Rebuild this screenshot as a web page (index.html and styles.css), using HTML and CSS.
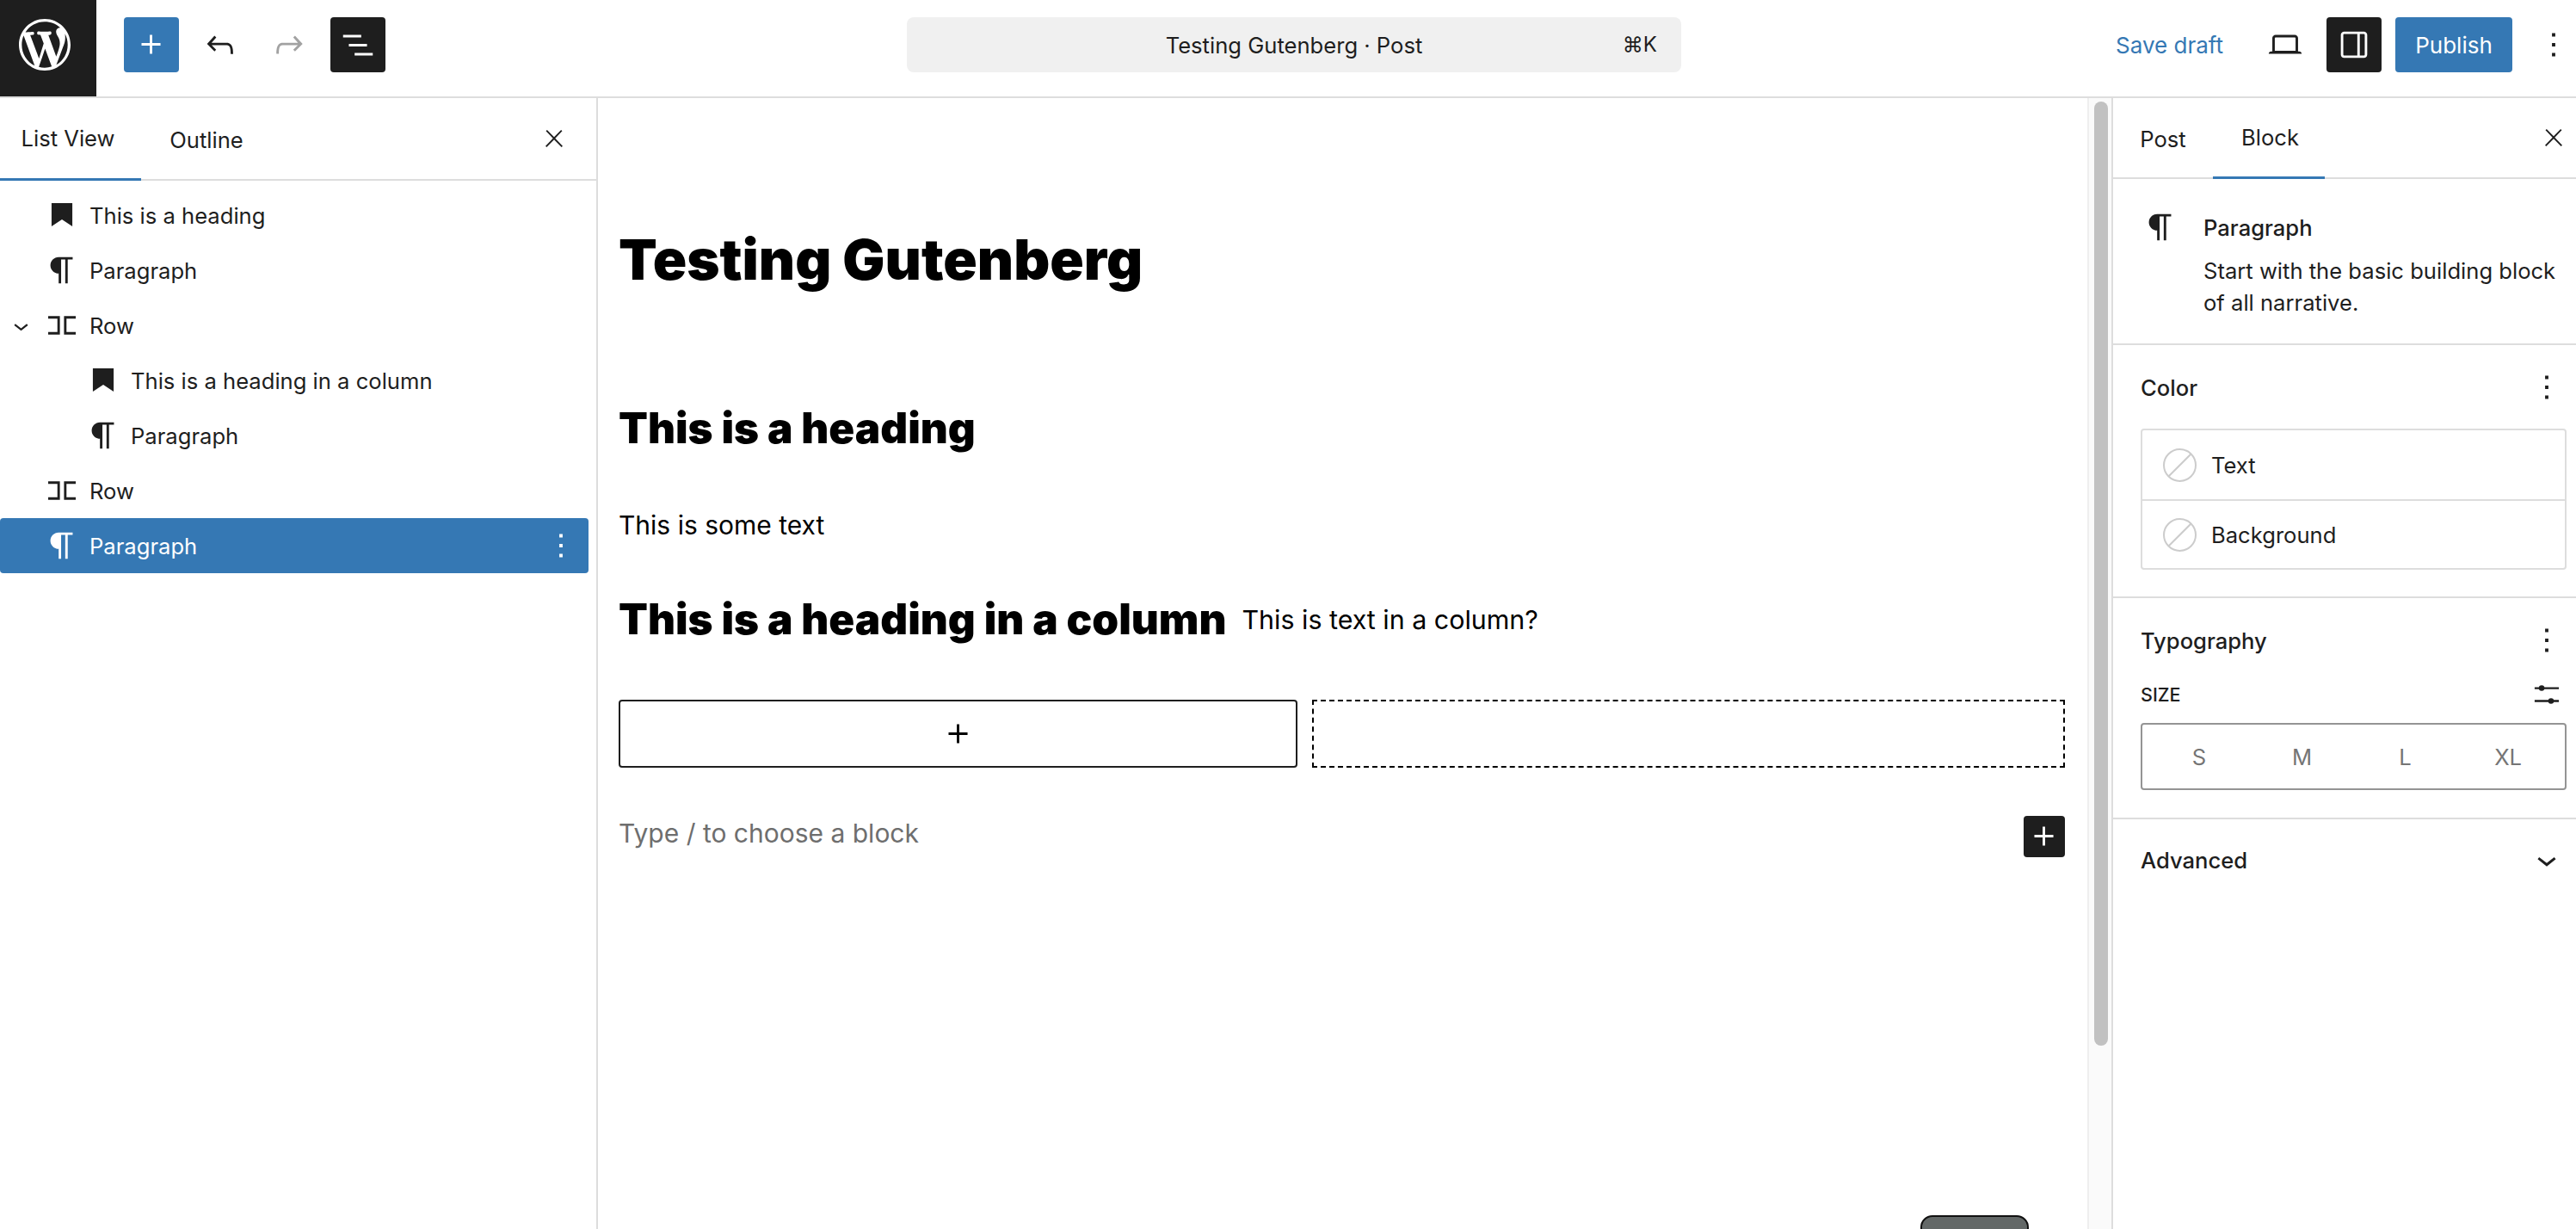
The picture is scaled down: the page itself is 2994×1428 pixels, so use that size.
FILE: index.html
```html
<!DOCTYPE html>
<html lang="en">
<head>
    <meta charset="UTF-8">
    <title>Testing Gutenberg</title>
    <link rel="stylesheet" href="styles.css">
</head>
<body>
    <header class="topbar">
        <div class="topbar-left">
            <div class="logo">
                <svg viewBox="0 0 20 20" width="60" height="60"><path d="M20 10c0-5.51-4.49-10-10-10C4.48 0 0 4.49 0 10c0 5.52 4.48 10 10 10 5.51 0 10-4.48 10-10zM7.78 15.37L4.37 6.22c.55-.02 1.17-.08 1.17-.08.5-.06.44-1.13-.06-1.11 0 0-1.45.11-2.37.11-.18 0-.37 0-.58-.01C4.12 2.69 6.87 1.11 10 1.11c2.33 0 4.45.87 6.05 2.34-.68-.11-1.65.39-1.65 1.58 0 .74.45 1.36.9 2.1.35.61.55 1.36.55 2.46 0 1.49-1.4 5-1.4 5l-3.03-8.37c.54-.02.82-.17.82-.17.5-.05.44-1.25-.06-1.22 0 0-1.44.12-2.38.12-.87 0-2.33-.12-2.33-.12-.5-.03-.56 1.2-.06 1.22l.92.08 1.26 3.41zM17.41 10c.24-.64.74-1.87.43-4.25.7 1.29 1.05 2.71 1.05 4.25 0 3.29-1.73 6.24-4.4 7.78.97-2.59 1.94-5.2 2.92-7.78zM6.1 18.09C3.12 16.65 1.11 13.53 1.11 10c0-1.3.23-2.48.72-3.59C3.25 10.3 4.67 14.2 6.1 18.09zm4.03-6.63l2.58 6.98c-.86.29-1.76.45-2.71.45-.79 0-1.57-.11-2.29-.33.81-2.38 1.62-4.74 2.42-7.1z"/></svg>
            </div>
            <div class="tools">
                <div class="tool tool-blue"><svg class="icon" viewBox="0 0 24 24"><path d="M11 12.5V17.5H12.5V12.5H17.5V11H12.5V6H11V11H6V12.5H11Z"/></svg></div>
                <div class="tool"><svg class="icon" viewBox="0 0 24 24"><path d="M18.3 11.7c-.6-.6-1.4-.9-2.3-.9H6.7l2.9-3.3-1.1-1-4.5 5L8.5 16l1-1-2.7-2.7H16c.5 0 .9.2 1.3.5 1 1 1 3.4 1 4.5v.3h1.5v-.2c0-1.5 0-4.3-1.5-5.7z"/></svg></div>
                <div class="tool tool-disabled"><svg class="icon" viewBox="0 0 24 24"><path d="M15.6 6.5l-1.1 1 2.9 3.3H8c-.9 0-1.7.3-2.3.9-1.4 1.5-1.4 4.2-1.4 5.6v.2h1.5v-.3c0-1.1 0-3.5 1-4.5.3-.3.7-.5 1.3-.5h9.2L14.5 15l1.1 1.1 4.6-4.6-4.6-5z"/></svg></div>
                <div class="tool tool-dark"><svg class="icon" viewBox="0 0 24 24"><path d="M3 6h11v1.5H3V6zm3.5 5.5h11V13h-11v-1.5zM21 17H10v1.5h11V17z"/></svg></div>
            </div>
        </div>
        <div class="command">
            <span class="command-title">Testing Gutenberg · Post</span>
            <span class="command-key">⌘K</span>
        </div>
        <div class="topbar-right">
            <span class="save-draft">Save draft</span>
            <svg class="icon laptop" viewBox="0 0 24 24"><path d="M20.5 16h-.7V8c0-1.1-.9-2-2-2H6.2c-1.1 0-2 .9-2 2v8h-.7c-.8 0-1.5.7-1.5 1.5h20c0-.8-.7-1.5-1.5-1.5zM5.7 8c0-.3.2-.5.5-.5h11.6c.3 0 .5.2.5.5v7.6H5.7V8z"/></svg>
            <div class="tool tool-dark toggle"><svg class="icon" viewBox="0 0 24 24"><path fill-rule="evenodd" d="M18 4H6c-1.1 0-2 .9-2 2v12c0 1.1.9 2 2 2h12c1.1 0 2-.9 2-2V6c0-1.1-.9-2-2-2zm-4 14.5H6c-.3 0-.5-.2-.5-.5V6c0-.3.2-.5.5-.5h8v13zm4.5-.5c0 .3-.2.5-.5.5h-2.5v-13H18c.3 0 .5.2.5.5v12z"/></svg></div>
            <div class="publish">Publish</div>
            <svg class="icon top-kebab" viewBox="0 0 24 24"><path d="M13 19h-2v-2h2v2zm0-6h-2v-2h2v2zm0-6h-2V5h2v2z"/></svg>
        </div>
    </header>

    <div class="main">
        <aside class="list-panel">
            <div class="tabs">
                <div class="tab tab-list active">List View</div>
                <div class="tab tab-outline">Outline</div>
                <svg class="tabs-close" viewBox="0 0 24 24"><path d="M13 11.8l6.1-6.3-1-1-6.1 6.2-6.1-6.2-1 1 6.1 6.3-6.5 6.7 1 1 6.5-6.6 6.5 6.6 1-1z"/></svg>
            </div>
            <div class="tree">
                <div class="row">
                    <span class="expander"></span>
                    <svg class="icon" viewBox="0 0 24 24"><path d="M5.7 4.7h12.6v14.1L12 14.6l-6.3 4.2z"/></svg>
                    <span class="row-label">This is a heading</span>
                </div>
                <div class="row">
                    <span class="expander"></span>
                    <svg class="icon" viewBox="0 0 24 24"><path d="m9.99609 14v-.2251l.00391.0001v6.225h1.5v-14.5h2.5v14.5h1.5v-14.5h3v-1.5h-8.50391c-2.76142 0-5 2.23858-5 5 0 2.7614 2.23858 5 5 5z"/></svg>
                    <span class="row-label">Paragraph</span>
                </div>
                <div class="row">
                    <span class="expander"><svg class="chevron-small" viewBox="0 0 24 24"><path d="M17.5 11.6L12 16l-5.5-4.4.9-1.2L12 14l4.5-3.6 1 1.2z"/></svg></span>
                    <svg class="icon" viewBox="0 0 24 24"><path class="row-icon" d="M3.65 7.2H10V16.8H3.65M20.35 7.2H14V16.8H20.35"/></svg>
                    <span class="row-label">Row</span>
                </div>
                <div class="row nested">
                    <span class="expander"></span>
                    <svg class="icon" viewBox="0 0 24 24"><path d="M5.7 4.7h12.6v14.1L12 14.6l-6.3 4.2z"/></svg>
                    <span class="row-label">This is a heading in a column</span>
                </div>
                <div class="row nested">
                    <span class="expander"></span>
                    <svg class="icon" viewBox="0 0 24 24"><path d="m9.99609 14v-.2251l.00391.0001v6.225h1.5v-14.5h2.5v14.5h1.5v-14.5h3v-1.5h-8.50391c-2.76142 0-5 2.23858-5 5 0 2.7614 2.23858 5 5 5z"/></svg>
                    <span class="row-label">Paragraph</span>
                </div>
                <div class="row">
                    <span class="expander"></span>
                    <svg class="icon" viewBox="0 0 24 24"><path class="row-icon" d="M3.65 7.2H10V16.8H3.65M20.35 7.2H14V16.8H20.35"/></svg>
                    <span class="row-label">Row</span>
                </div>
                <div class="row selected">
                    <span class="expander"></span>
                    <svg class="icon" viewBox="0 0 24 24"><path d="m9.99609 14v-.2251l.00391.0001v6.225h1.5v-14.5h2.5v14.5h1.5v-14.5h3v-1.5h-8.50391c-2.76142 0-5 2.23858-5 5 0 2.7614 2.23858 5 5 5z"/></svg>
                    <span class="row-label">Paragraph</span>
                    <svg class="icon row-kebab" viewBox="0 0 24 24"><path d="M13 19h-2v-2h2v2zm0-6h-2v-2h2v2zm0-6h-2V5h2v2z"/></svg>
                </div>
            </div>
        </aside>

        <main class="canvas">
            <div class="editor">
                <h1 class="post-title">Testing Gutenberg</h1>
                <h2 class="block-heading">This is a heading</h2>
                <p class="block-text">This is some text</p>
                <div class="columns">
                    <h2 class="block-heading">This is a heading in a column</h2>
                    <p class="block-text">This is text in a column?</p>
                </div>
                <div class="appender-row">
                    <div class="appender"><svg class="icon" viewBox="0 0 24 24"><path d="M11 12.5V17.5H12.5V12.5H17.5V11H12.5V6H11V11H6V12.5H11Z"/></svg></div>
                    <div class="dropzone"></div>
                </div>
                <div class="new-block">
                    <p class="placeholder">Type / to choose a block</p>
                    <div class="inserter"><svg class="icon" viewBox="0 0 24 24"><path d="M11 12.5V17.5H12.5V12.5H17.5V11H12.5V6H11V11H6V12.5H11Z"/></svg></div>
                </div>
                <div class="float-button"></div>
            </div>
            <div class="scrollbar"><div class="thumb"></div></div>
        </main>

        <aside class="settings">
            <div class="tabs settings-tabs">
                <div class="tab tab-post">Post</div>
                <div class="tab tab-block active">Block</div>
                <svg class="tabs-close" viewBox="0 0 24 24"><path d="M13 11.8l6.1-6.3-1-1-6.1 6.2-6.1-6.2-1 1 6.1 6.3-6.5 6.7 1 1 6.5-6.6 6.5 6.6 1-1z"/></svg>
            </div>
            <section class="block-card">
                <svg class="icon" viewBox="0 0 24 24"><path d="m9.99609 14v-.2251l.00391.0001v6.225h1.5v-14.5h2.5v14.5h1.5v-14.5h3v-1.5h-8.50391c-2.76142 0-5 2.23858-5 5 0 2.7614 2.23858 5 5 5z"/></svg>
                <div class="block-card-text">
                    <div class="block-card-title">Paragraph</div>
                    <div class="block-card-desc">Start with the basic building block of all narrative.</div>
                </div>
            </section>
            <section class="panel panel-color">
                <div class="panel-head">
                    <span class="panel-title">Color</span>
                    <svg class="icon" viewBox="0 0 24 24"><path d="M13 19h-2v-2h2v2zm0-6h-2v-2h2v2zm0-6h-2V5h2v2z"/></svg>
                </div>
                <div class="color-box">
                    <div class="color-item">
                        <svg class="swatch" viewBox="0 0 39 39"><circle cx="19.5" cy="19.5" r="18.5"/><path d="M6.5 32.5L32.5 6.5"/></svg>
                        <span>Text</span>
                    </div>
                    <div class="color-item">
                        <svg class="swatch" viewBox="0 0 39 39"><circle cx="19.5" cy="19.5" r="18.5"/><path d="M6.5 32.5L32.5 6.5"/></svg>
                        <span>Background</span>
                    </div>
                </div>
            </section>
            <section class="panel panel-type">
                <div class="panel-head">
                    <span class="panel-title">Typography</span>
                    <svg class="icon" viewBox="0 0 24 24"><path d="M13 19h-2v-2h2v2zm0-6h-2v-2h2v2zm0-6h-2V5h2v2z"/></svg>
                </div>
                <div class="size-head">
                    <span class="size-label">SIZE</span>
                    <svg class="icon" viewBox="0 0 24 24"><path class="slider-line" d="M4.65 8.1H19.35M4.65 15.9H19.35"/><circle cx="8.9" cy="8.1" r="1.7"/><circle cx="14.6" cy="15.9" r="1.7"/></svg>
                </div>
                <div class="size-picker">
                    <span>S</span><span>M</span><span>L</span><span>XL</span>
                </div>
            </section>
            <section class="panel panel-advanced">
                <div class="panel-head">
                    <span class="panel-title">Advanced</span>
                    <svg class="icon" viewBox="0 0 24 24"><path d="M17.5 11.6L12 16l-5.5-4.4.9-1.2L12 14l4.5-3.6 1 1.2z"/></svg>
                </div>
            </section>
        </aside>
    </div>
</body>
</html>
```
FILE: styles.css
```css
* {
    box-sizing: border-box;
}
html, body {
    height: 100%;
}
body {
    margin: 0;
    font-family: Inter, "Liberation Sans", sans-serif;
    font-size: 25.6px;
    color: #1e1e1e;
    background: #fff;
    overflow: hidden;
}
.icon {
    width: 46px;
    height: 46px;
    flex: none;
    display: block;
    fill: currentColor;
}

/* top bar */
.topbar {
    height: 114px;
    border-bottom: 2px solid #ddd;
    display: grid;
    grid-template-columns: 1054px 900px 1fr;
    align-items: start;
}
.topbar-left {
    display: flex;
}
.logo {
    width: 112px;
    height: 112px;
    padding: 0 8px 8px 0;
    background: #1e1e1e;
    display: flex;
    align-items: center;
    justify-content: center;
    fill: #fff;
}
.tools {
    display: flex;
    gap: 16px;
    margin: 20px 0 0 32px;
}
.tool {
    width: 64px;
    height: 64px;
    border-radius: 4px;
    display: flex;
    align-items: center;
    justify-content: center;
}
.tool-blue {
    background: #3578b4;
    color: #fff;
}
.tool-dark {
    background: #1e1e1e;
    color: #fff;
}
.tool-disabled {
    color: #a2a2a2;
}
.command {
    height: 64px;
    margin-top: 20px;
    background: #f0f0f0;
    border-radius: 8px;
    display: flex;
    align-items: center;
    justify-content: center;
    position: relative;
}
.command-key {
    position: absolute;
    right: 28px;
    top: 17px;
    font-size: 24px;
}
.topbar-right {
    display: flex;
    align-items: center;
    height: 64px;
    margin-top: 20px;
}
.save-draft {
    color: #3578b4;
    margin-left: 505px;
    width: 174px;
    flex: none;
    font-size: 26px;
}
.laptop {
    margin-right: 25px;
}
.toggle {
    flex: none;
}
.publish {
    width: 136px;
    height: 64px;
    flex: none;
    margin-left: 16px;
    background: #3578b4;
    color: #fff;
    border-radius: 4px;
    display: flex;
    align-items: center;
    justify-content: center;
    font-size: 26px;
}
.top-kebab {
    margin-left: 25px;
}

/* layout */
.main {
    display: flex;
    height: 1314px;
}
.list-panel {
    width: 695px;
    flex: none;
    border-right: 2px solid #ddd;
}
.canvas {
    flex: 1;
    display: flex;
    min-width: 0;
}
.settings {
    width: 540px;
    flex: none;
    border-left: 2px solid #ddd;
}

/* tabs */
.tabs {
    height: 96px;
    display: flex;
    border-bottom: 2px solid #ddd;
    align-items: stretch;
}
.tab {
    display: flex;
    align-items: center;
    justify-content: center;
    margin-bottom: -2px;
}
.tab.active {
    border-bottom: 3px solid #3578b4;
}
.tab-list {
    width: 164px;
    padding-right: 6px;
}
.tab-outline {
    width: 152px;
}
.tab-post {
    width: 116px;
}
.tab-block {
    width: 130px;
    padding-left: 3px;
}
.tabs-close {
    width: 32px;
    height: 32px;
    flex: none;
    fill: currentColor;
    margin: 31px 33px 0 auto;
}
.settings-tabs {
    height: 94px;
}
.settings-tabs .tabs-close {
    margin: 30px 10px 0 auto;
}

/* list view */
.tree {
    padding: 8px 9px 0 0;
}
.row {
    height: 64px;
    display: flex;
    align-items: center;
    border-radius: 4px;
}
.expander {
    width: 49px;
    flex: none;
    display: flex;
    justify-content: center;
}
.nested {
    padding-left: 48px;
}
.row-label {
    margin-left: 9px;
}
.chevron-small {
    width: 35px;
    height: 35px;
    display: block;
    margin-left: -1px;
    fill: currentColor;
}
.row-icon {
    fill: none;
    stroke: currentColor;
    stroke-width: 1.5;
}
.selected {
    background: #3578b4;
    color: #fff;
}
.row-kebab {
    margin-left: auto;
    margin-right: 9px;
}

/* editor canvas */
.editor {
    flex: 1;
    min-width: 0;
    padding: 152px 26px 0 24px;
    position: relative;
    overflow: hidden;
    color: #000;
}
.post-title {
    margin: 0 0 131px;
    font-size: 65.2px;
    line-height: 72px;
    font-weight: 900;
}
.block-heading {
    margin: 0;
    font-size: 49.4px;
    line-height: 56px;
    font-weight: 900;
}
.block-text {
    margin: 60px 0 58px;
    font-size: 30px;
    line-height: 48px;
    position: relative;
    top: 1px;
}
.columns {
    display: flex;
    align-items: center;
    gap: 18px;
}
.columns .block-text {
    margin: 0;
    font-size: 30.4px;
}
.appender-row {
    display: flex;
    gap: 17px;
    margin-top: 66px;
}
.appender {
    width: 789px;
    height: 79px;
    border: 2px solid #1e1e1e;
    border-radius: 4px;
    display: flex;
    align-items: center;
    justify-content: center;
}
.dropzone {
    flex: 1;
    height: 79px;
    border: 2px dashed #000;
}
.new-block {
    display: flex;
    justify-content: space-between;
    margin-top: 52px;
}
.placeholder {
    margin: 0;
    font-size: 30px;
    line-height: 48px;
    color: #6e6e6e;
}
.inserter {
    width: 48px;
    height: 48px;
    margin-top: 4px;
    background: #1e1e1e;
    color: #fff;
    border-radius: 4px;
    display: flex;
    align-items: center;
    justify-content: center;
}
.float-button {
    position: absolute;
    left: 1537px;
    bottom: -20px;
    width: 126px;
    height: 36px;
    background: #636867;
    border: 2px solid #111;
    border-radius: 14px;
}
.scrollbar {
    width: 28px;
    flex: none;
    background: #fafafa;
    border-left: 2px solid #eee;
}
.thumb {
    width: 16px;
    height: 1097px;
    margin: 4px 0 0 6px;
    background: #c1c1c1;
    border-radius: 8px;
}

/* settings sidebar */
.block-card {
    height: 193px;
    border-bottom: 2px solid #ddd;
    display: flex;
    padding: 33px 0 0 32px;
}
.block-card-text {
    margin: 5px 0 0 27px;
    line-height: 37px;
}
.block-card-title {
    font-weight: 500;
    margin-bottom: 13px;
}
.block-card-desc {
    width: 420px;
}
.panel {
    border-bottom: 2px solid #ddd;
    padding: 26px 11px 0 32px;
}
.panel-color {
    height: 294px;
}
.panel-type {
    height: 257px;
}
.panel-advanced {
    border-bottom: 0;
    padding-top: 24px;
}
.panel-head {
    display: flex;
    align-items: center;
    justify-content: space-between;
    height: 46px;
}
.panel-title {
    font-weight: 500;
}
.color-box {
    margin-top: 25px;
    height: 164px;
    border: 2px solid #ddd;
    border-radius: 4px;
}
.color-item {
    height: 80px;
    display: flex;
    align-items: center;
    gap: 17px;
    padding-left: 24px;
}
.color-item + .color-item {
    height: 80px;
    border-top: 2px solid #ddd;
}
.swatch {
    width: 39px;
    height: 39px;
    flex: none;
    fill: none;
    stroke: #ccc;
    stroke-width: 2;
}
.size-head {
    display: flex;
    align-items: center;
    justify-content: space-between;
    margin-top: 17px;
    height: 46px;
}
.size-label {
    font-size: 21.5px;
    font-weight: 500;
}
.slider-line {
    fill: none;
    stroke: currentColor;
    stroke-width: 1.2;
}
.size-picker {
    margin-top: 10px;
    height: 78px;
    border: 2px solid #949494;
    border-radius: 4px;
    display: grid;
    grid-template-columns: repeat(4, 1fr);
    align-items: center;
    justify-items: center;
    padding: 0 6px;
    color: #757575;
}
```
